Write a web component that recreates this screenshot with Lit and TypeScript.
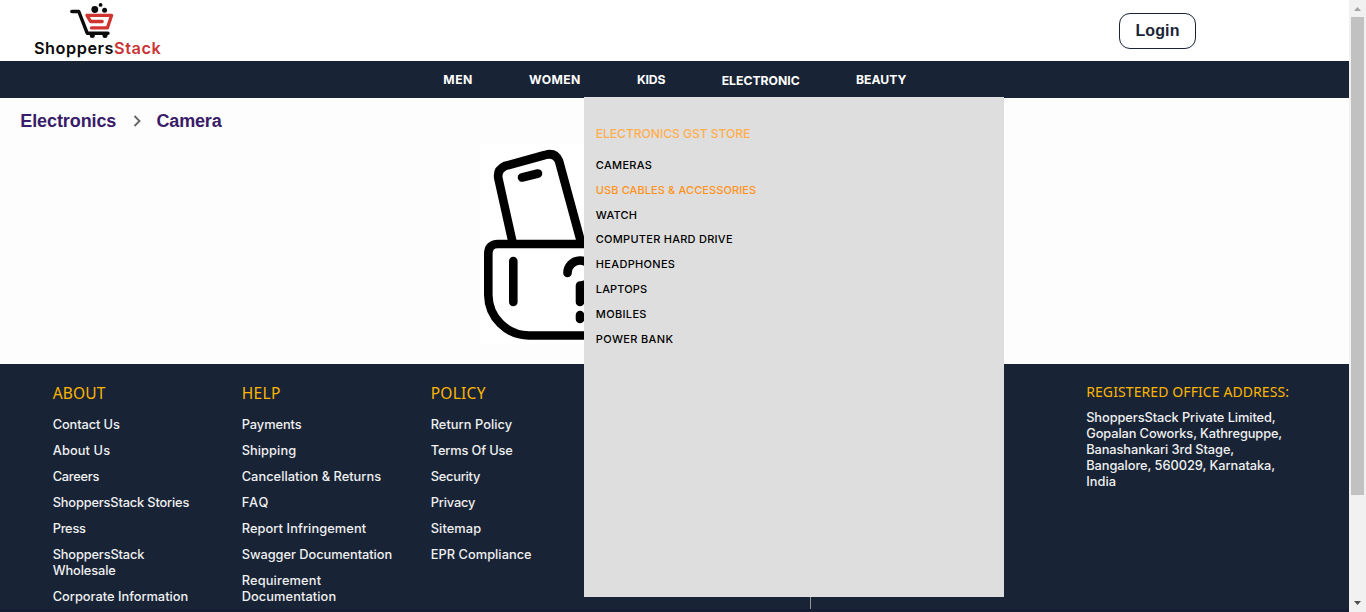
import { LitElement, html, css, svg } from "lit";
import { customElement, property } from "lit/decorators.js";

type Item = [string, number];

/* One line of text whose tracking is adjusted to a given width. */
@customElement("tracked-text")
class TrackedText extends LitElement {
  @property() text = "";
  @property({ type: Number }) width = 0;
  static styles = css`
    :host { display: block; white-space: nowrap; }
    span { display: inline-block; }
  `;
  render() {
    return html`<span>${this.text}</span>`;
  }
  updated() {
    const el = this.renderRoot.querySelector("span") as HTMLElement;
    el.style.letterSpacing = "0px";
    const natural = el.getBoundingClientRect().width;
    if (this.width && natural) {
      el.style.letterSpacing = `${(this.width - natural) / this.text.length}px`;
    }
  }
}

const t = (item: Item) => html`<tracked-text .text=${item[0]} .width=${item[1]}></tracked-text>`;

const NAV: Item[] = [["MEN", 29.5], ["WOMEN", 51.5], ["KIDS", 28.5], ["ELECTRONIC", 78], ["BEAUTY", 50.5]];

const MENU: Item[] = [
  ["CAMERAS", 56.5], ["USB CABLES & ACCESSORIES", 160.5], ["WATCH", 41.5],
  ["COMPUTER HARD DRIVE", 137], ["HEADPHONES", 79.5], ["LAPTOPS", 51.5],
  ["MOBILES", 51], ["POWER BANK", 77.5],
];

const COLUMNS: { title: Item; links: Item[][] }[] = [
  {
    title: ["ABOUT", 53],
    links: [
      [["Contact Us", 67]], [["About Us", 57.5]], [["Careers", 46.5]],
      [["ShoppersStack Stories", 136.5]], [["Press", 33]],
      [["ShoppersStack", 91.5], ["Wholesale", 63]], [["Corporate Information", 135.5]],
    ],
  },
  {
    title: ["HELP", 39],
    links: [
      [["Payments", 60]], [["Shipping", 54.5]], [["Cancellation & Returns", 139.5]],
      [["FAQ", 27.5]], [["Report Infringement", 124.5]], [["Swagger Documentation", 150.5]],
      [["Requirement", 79.5], ["Documentation", 94.5]],
    ],
  },
  {
    title: ["POLICY", 55],
    links: [
      [["Return Policy", 81.5]], [["Terms Of Use", 82]], [["Security", 49.5]],
      [["Privacy", 44.5]], [["Sitemap", 50.5]], [["EPR Compliance", 101]],
    ],
  },
];

const ADDRESS: Item[] = [
  ["ShoppersStack Private Limited,", 189.5], ["Gopalan Coworks, Kathreguppe,", 196],
  ["Banashankari 3rd Stage,", 148], ["Bangalore, 560029, Karnataka,", 189], ["India", 30],
];

const cart = svg`
  <path d="M5.8 11.5H12.8L21.2 33.2H42" fill="none" stroke="#0b0b0b" stroke-width="3.4" stroke-linecap="round" stroke-linejoin="round"/>
  <circle cx="26.3" cy="35.6" r="2.5" fill="#0b0b0b"/><circle cx="39" cy="35.6" r="2.5" fill="#0b0b0b"/>
  <circle cx="28.8" cy="9.5" r="3.4" fill="#0b0b0b"/><circle cx="34.6" cy="4.9" r="1.9" fill="#0b0b0b"/>
  <circle cx="38.6" cy="10.2" r="2.5" fill="#0b0b0b"/>
  <path d="M36.2 21.5H24.6L21 15.3H45.6L41.4 27.9H25.5" fill="none" stroke="#cf3430" stroke-width="3.3" stroke-linecap="round" stroke-linejoin="round"/>`;

@customElement("app-root")
class AppRoot extends LitElement {
  static styles = css`
    :host {
      display: grid; grid-template-columns: 1fr 17px; height: 612px; overflow: hidden;
      font-family: Inter, "Noto Sans", sans-serif; background: #fdfdfd;
    }
    .page { position: relative; display: flex; flex-direction: column; overflow: hidden; height: 612px; }
    header {
      height: 61px; flex: none; background: #fff; display: flex; justify-content: space-between;
      box-sizing: border-box; padding: 0 153px 0 34px;
    }
    .logo { width: 128px; display: flex; flex-direction: column; }
    .logo svg { width: 52px; height: 39px; margin-left: 32px; display: block; flex: none; }
    .brand { display: flex; font: 600 16.3px/18px Inter, sans-serif; color: #0b0b0b; }
    .brand .red { color: #c93434; }
    .login {
      width: 77px; height: 36px; margin-top: 13px; box-sizing: border-box;
      border: 1px solid #182436; border-radius: 11px; background: #fff; color: #182436;
      display: flex; justify-content: center; font: 700 16px/34px "Liberation Sans", Arial, sans-serif;
    }
    nav {
      height: 37px; flex: none; background: #182436; color: #fff; box-sizing: border-box;
      display: flex; gap: 56.3px; padding-left: 443.3px; font-weight: 700; font-size: 12.2px; line-height: 37px;
    }
    nav .open { padding-top: 1px; }
    main { height: 266px; flex: none; background: #fdfdfd; box-sizing: border-box; padding-top: 13px; }
    .crumbs {
      display: flex; align-items: center; height: 20px; padding-left: 20.3px; color: #3a1b69;
      font: 700 18px/20px "Liberation Sans", Arial, sans-serif;
    }
    .crumbs svg { width: 8px; height: 12px; margin: 0 15.5px 0 16.7px; }
    .empty { display: block; width: 200px; height: 200px; margin: 13px 0 0 480px; background: #fff; }
    footer {
      flex: 1; background: #182436; color: #f0f0f0; display: flex; padding: 20px 0 0 52.7px;
      font-size: 12.8px; line-height: 16px; font-weight: 500; box-sizing: border-box;
      border-bottom: 3px solid #151d35; overflow: hidden; min-height: 0;
    }
    .col { width: 189px; flex: none; }
    .col h3 {
      margin: 0 0 14px; font: 400 15.5px/19px "Noto Sans", sans-serif; color: #fcb501;
    }
    .link { margin-bottom: 10px; }
    .middle { width: 190.3px; height: 225px; flex: none; border-right: 1px solid #969696; }
    .office { margin-left: 275.2px; }
    .office h3 { margin: 0 0 10px; font: 400 14px/16px "Noto Sans", sans-serif; color: #fcb501; }
    .menu {
      position: absolute; left: 584px; top: 97px; width: 420px; height: 500px; box-sizing: border-box;
      padding: 27px 0 0 11.8px; background: #dedede; color: #000; font-size: 11px; font-weight: 500;
      line-height: 24.8px;
    }
    .menu h4 { margin: 0 0 9px; font-size: 12.2px; line-height: 20px; font-weight: 500; color: #ffae4f; }
    .menu .hover { color: #ff9220; }
    .bar { background: #f1f1f1; display: flex; flex-direction: column; align-items: center; height: 612px; }
    .bar svg { width: 17px; height: 17px; flex: none; display: block; }
    .thumb { width: 13px; height: 478px; background: #c1c1c1; }
    .space { flex: 1; }
  `;

  render() {
    return html`
      <div class="page">
        <header>
          <div class="logo">
            <svg viewBox="0 0 52 39">${cart}</svg>
            <div class="brand">${t(["Shoppers", 80])}<span class="red">${t(["Stack", 47.5])}</span></div>
          </div>
          <div class="login">${t(["Login", 44])}</div>
        </header>
        <nav>${NAV.map((n, i) => html`<div class=${i === 3 ? "open" : ""}>${t(n)}</div>`)}</nav>
        <main>
          <div class="crumbs">
            ${t(["Electronics", 96])}
            <svg viewBox="0 0 8 12"><path d="M1.5 1L6.5 6L1.5 11" fill="none" stroke="#666" stroke-width="1.9"/></svg>
            ${t(["Camera", 65])}
          </div>
          <svg class="empty" viewBox="0 0 200 200">
            <g fill="none" stroke="#000" stroke-width="8.6" stroke-linecap="round" stroke-linejoin="round">
              <path d="M32.5 98L18.5 35Q16.5 26 25 22L65 11Q75 8 79 17L101 98"/>
              <path d="M42 33.5L58 29.5"/>
              <path d="M18 100H182Q192 100 192 110V151A41 41 0 0 1 151 191.5H49A41 41 0 0 1 8.3 151V110Q8.3 100 18 100Z"/>
              <path d="M33.3 117V158"/>
              <path d="M87.5 129A12.5 12.5 0 1 1 101 141.5H100V158"/>
              <path d="M100 171V175"/>
            </g>
          </svg>
        </main>
        <footer>
          ${COLUMNS.map((c) => html`<div class="col">
            <h3>${t(c.title)}</h3>
            ${c.links.map((l) => html`<div class="link">${l.map(t)}</div>`)}
          </div>`)}
          <div class="middle"></div>
          <div class="office">
            <h3>${t(["REGISTERED OFFICE ADDRESS:", 203])}</h3>
            ${ADDRESS.map(t)}
          </div>
        </footer>
        <div class="menu">
          <h4>${t(["ELECTRONICS GST STORE", 154.5])}</h4>
          ${MENU.map((m, i) => html`<div class=${i === 1 ? "hover" : ""}>${t(m)}</div>`)}
        </div>
      </div>
      <div class="bar">
        <svg viewBox="0 0 17 17"><path d="M5 11L8.5 7L12 11Z" fill="#a3a3a3"/></svg>
        <div class="thumb"></div>
        <div class="space"></div>
        <svg viewBox="0 0 17 17"><path d="M5 6L8.5 10L12 6Z" fill="#505050"/></svg>
      </div>`;
  }
}
